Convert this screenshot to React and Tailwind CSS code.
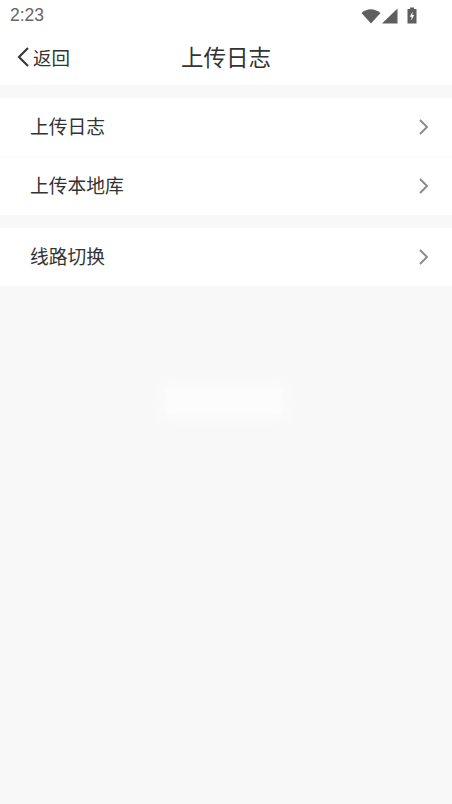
const Chevron = () => (
  <svg width="12" height="18" viewBox="0 0 12 18" fill="none" stroke="#8a8a8a" strokeWidth="1.9">
    <path d="M2 2 L9 9 L2 16" />
  </svg>
);

const Row = ({ label, border, h }) => (
  <div className={`flex items-center justify-between bg-white pl-[30px] pr-[22px] ${h} ${border ? 'border-b border-[#f8f8f8]' : ''}`}>
    <span className="mt-[-2px] text-[18.75px] text-[#333333]">{label}</span>
    <Chevron />
  </div>
);

export default function App() {
  return (
    <div
      className="flex h-[804px] w-[452px] flex-col overflow-hidden bg-[#f8f8f8]"
      style={{ fontFamily: '"Noto Sans CJK SC", "Liberation Sans", sans-serif' }}
    >
      <div className="flex h-[31px] items-center justify-between bg-white pl-[10px] pr-[34px]">
        <span className="text-[17.5px] text-[#666666]" style={{ fontFamily: '"Liberation Sans", sans-serif' }}>2:23</span>
        <div className="flex items-center gap-[1px]">
          <svg width="20" height="16" viewBox="0 0 20 16" fill="#5f5f5f">
            <path d="M0.5 5 Q9.5 -2.5 19.5 5 L10 15.5 Z" />
          </svg>
          <svg width="16" height="16" viewBox="0 0 16 16" fill="#5f5f5f">
            <path d="M0 15.5 L15.5 0.5 V15.5 Z" />
          </svg>
          <svg width="12" height="17" viewBox="0 0 12 17" className="ml-[7px]">
            <path fill="#5f5f5f" d="M4 0.5 H8 V2 H10.5 V16.5 H1.5 V2 H4 Z" />
            <path fill="#ffffff" d="M6.8 4.5 L3.8 9.8 H5.7 L5.2 13.5 L8.2 8 H6.3 Z" />
          </svg>
        </div>
      </div>

      <div className="relative flex h-[54px] items-center justify-center bg-white">
        <div className="absolute left-[17px] top-[14px] flex items-center gap-[4px]">
          <svg width="12" height="20" viewBox="0 0 12 20" fill="none" stroke="#3a3a3a" strokeWidth="2.2">
            <path d="M11 1 L2 10 L11 19" />
          </svg>
          <span className="text-[18.5px] leading-[24px] text-[#333333]">返回</span>
        </div>
        <span className="mt-[-2px] text-[22.5px] text-[#333333]">上传日志</span>
      </div>

      <div className="mt-[13px]">
        <Row label="上传日志" border h="h-[59px]" />
        <Row label="上传本地库" h="h-[58px]" />
      </div>

      <div className="mt-[13px]">
        <Row label="线路切换" h="h-[58px]" />
      </div>

      <div className="flex flex-1 justify-center pt-[102px]">
        <div className="ml-[-4px] h-[26px] w-[116px] bg-[#fcfcfc] shadow-[0_0_12px_6px_#fbfbfb]" />
      </div>
    </div>
  );
}
